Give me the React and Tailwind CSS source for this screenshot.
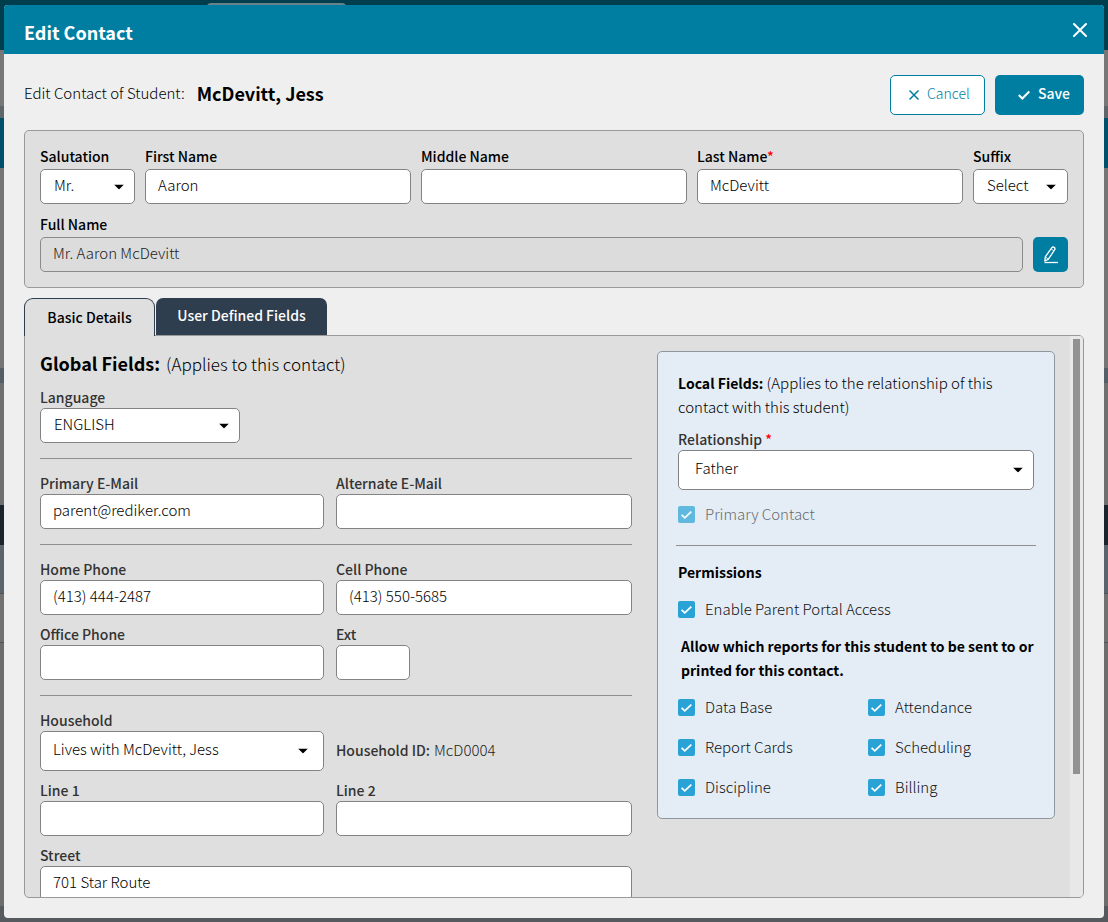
import React from "react";

const fieldBox =
  "w-full rounded-[5px] border border-[#838383] bg-white text-[15px] font-light text-black outline-none";

function Caret({ className }) {
  return (
    <svg viewBox="0 0 10 5" className={`pointer-events-none absolute top-1/2 h-[5px] w-[10px] -translate-y-1/2 ${className}`} aria-hidden="true">
      <path d="M0 0h10L5 5z" fill="#000" />
    </svg>
  );
}

function Label({ id, children, className = "leading-[18px] text-[#333]" }) {
  return (
    <label htmlFor={id} className={`block whitespace-nowrap pb-[2px] text-sm font-medium ${className}`}>
      {children}
    </label>
  );
}

function TextField({ id, label, value = "", labelClass, className = "" }) {
  return (
    <div className={className}>
      <Label id={id} className={labelClass}>{label}</Label>
      <input id={id} type="text" defaultValue={value} className={`${fieldBox} block h-[35px] px-3 pb-1`} />
    </div>
  );
}

function SelectField({ id, label, value, labelClass, className = "", size = "h-[35px] pb-[2px] pl-[13px]", caret = "right-[11px]" }) {
  return (
    <div className={className}>
      <Label id={id} className={labelClass}>{label}</Label>
      <div className="relative">
        <select id={id} defaultValue={value} className={`${fieldBox} block appearance-none ${size}`}>
          <option>{value}</option>
        </select>
        <Caret className={caret} />
      </div>
    </div>
  );
}

function Check({ id, label, disabled = false }) {
  return (
    <div className={`flex h-6 items-center gap-[10px] ${disabled ? "opacity-70" : ""}`}>
      <span className="relative flex">
        <input id={id} type="checkbox" defaultChecked disabled={disabled} className="size-[17px] appearance-none rounded-[2px] bg-[#29a3d5]" />
        <svg viewBox="0 0 17 17" className="pointer-events-none absolute inset-0 size-[17px]" fill="none" stroke="#fff" strokeWidth="1.8" aria-hidden="true">
          <path d="M3.6 8.8l3.2 3 6.5-6.2" />
        </svg>
      </span>
      <label htmlFor={id} className={`text-[15px] font-light leading-6 ${disabled ? "text-[#333]" : "text-[#111]"}`}>{label}</label>
    </div>
  );
}

const Rule = ({ className = "my-[15px]" }) => <hr className={`border-t border-[#8f8f8f] ${className}`} />;

function Backdrop() {
  return (
    <div className="flex h-full flex-col bg-[#6b6b6b]" aria-hidden="true">
      <div className="h-[50px] shrink-0 bg-[#003d4d] pl-[207px] pt-[3px]">
        <div className="h-2 w-[139px] rounded-t-[4px] bg-[#66828a]" />
      </div>
      <div className="h-14 shrink-0 bg-[#777]" />
      <div className="h-3 shrink-0 bg-[#5f6669]" />
      <div className="h-[50px] shrink-0 bg-[#00506b]" />
      <div className="h-[200px] shrink-0 bg-[#757575]" />
      <div className="h-[15px] shrink-0 bg-[#545e66]" />
      <div className="h-[122px] shrink-0 bg-[#6f6f6f]" />
      <div className="h-10 shrink-0 bg-[#1b242d]" />
      <div className="h-12 shrink-0 bg-[#59646d]" />
      <div className="h-[50px] shrink-0 border-y border-[#4e565c] bg-[#717171]" />
      <div className="grow bg-[#6d6d6d]" />
      <div className="h-4 shrink-0 bg-[#56595d]" />
    </div>
  );
}

function NameCard() {
  const dark = "leading-[22px] text-black";
  return (
    <section className="mt-[15px] rounded-[5px] border border-[#999] bg-[#dfdfdf] px-[15px] pb-[15px] pt-[14px]">
      <div className="grid grid-cols-[95px_1fr_1fr_1fr_95px] gap-[10px]">
        <SelectField id="salutation" label="Salutation" value="Mr." labelClass={dark} />
        <TextField id="first" label="First Name" value="Aaron" labelClass={dark} />
        <TextField id="middle" label="Middle Name" labelClass={dark} />
        <TextField id="last" label={<>Last Name<span className="text-[#f00]">*</span></>} value="McDevitt" labelClass={dark} />
        <SelectField id="suffix" label="Suffix" value="Select" labelClass={dark} caret="right-3" />
      </div>
      <div className="mt-[9px] flex items-end gap-[10px]">
        <div className="grow">
          <Label id="full" className={dark}>Full Name</Label>
          <input id="full" type="text" readOnly value="Mr. Aaron McDevitt" className="block h-[35px] w-full rounded-[5px] border border-[#8a8a8a] bg-[#dcdcdc] px-3 pb-1 text-[15px] font-light text-[#222] outline-none" />
        </div>
        <button type="button" aria-label="Edit full name" className="flex size-[35px] items-center justify-center rounded-[5px] bg-[#007ea2] text-white">
          <svg viewBox="0 0 16 18" className="h-[18px] w-4" fill="none" stroke="currentColor" strokeWidth="1.3" strokeLinejoin="round" aria-hidden="true">
            <path d="M1.8 15l.5-4.2L8.9 1.6q1-1.1 2.3-.2t.5 2.3L5.4 13.2z" />
            <path d="M2.3 10.8l3.1 2.4M8 2.9l3 2" strokeWidth=".8" />
            <path d="M1.5 16.5H15" />
          </svg>
        </button>
      </div>
    </section>
  );
}

function GlobalFields() {
  return (
    <div>
      <h2 className="mb-[9px] flex h-7 items-baseline gap-[6px] leading-6 text-black">
        <span className="text-lg font-bold leading-6">Global Fields:</span>
        <span className="text-[17px] font-light leading-6">(Applies to this contact)</span>
      </h2>
      <SelectField id="language" label="Language" value="ENGLISH" className="w-[200px]" />
      <Rule />
      <div className="grid grid-cols-[284fr_296fr] gap-x-3 gap-y-[10px]">
        <TextField id="email" label="Primary E-Mail" value="parent@rediker.com" />
        <TextField id="email2" label="Alternate E-Mail" />
      </div>
      <Rule />
      <div className="grid grid-cols-[284fr_296fr] gap-x-3 gap-y-[10px]">
        <TextField id="home" label="Home Phone" value="(413) 444-2487" />
        <TextField id="cell" label="Cell Phone" value="(413) 550-5685" />
        <TextField id="office" label="Office Phone" />
        <TextField id="ext" label="Ext" className="w-[74px]" />
      </div>
      <Rule />
      <div className="grid grid-cols-[284fr_296fr] gap-x-3 gap-y-[10px]">
        <SelectField id="household" label="Household" value="Lives with McDevitt, Jess" size="h-10 pb-1 pl-3" caret="right-4" />
        <p className="flex h-10 items-center gap-1 self-end pb-[2px] text-[#222]">
          <span className="text-sm font-medium text-[#333]">Household ID:</span>
          <span className="text-[15px] font-light">McD0004</span>
        </p>
        <TextField id="line1" label="Line 1" />
        <TextField id="line2" label="Line 2" />
        <TextField id="street" label="Street" value="701 Star Route" className="col-span-2" />
      </div>
    </div>
  );
}

function LocalFields() {
  return (
    <section className="self-start rounded-[5px] border border-[#8f979e] bg-[#e4edf6] px-5 pb-[19px] pt-[19px] text-sm leading-6">
      <p className="text-[15px] font-light leading-6 text-black">
        <span className="text-sm font-bold leading-6">Local Fields:</span> (Applies to the relationship of this contact with this student)
      </p>
      <SelectField
        id="relationship"
        label={<>Relationship <span className="text-[#f00]">*</span></>}
        value="Father"
        className="mb-3 mt-[11px]"
        size="h-10 pb-1 pl-4"
        caret="right-[11px]"
      />
      <Check id="primary" label="Primary Contact" disabled />
      <Rule className="-mx-[2px] mb-[14px] mt-[19px]" />
      <h3 className="mb-[13px] font-bold text-black">Permissions</h3>
      <Check id="portal" label="Enable Parent Portal Access" />
      <p className="my-[13px] ml-[3px] font-bold text-black">
        Allow which reports for this student to be sent to or printed for this contact.
      </p>
      <div className="grid grid-cols-[190px_1fr] gap-y-4">
        <Check id="database" label="Data Base" />
        <Check id="attendance" label="Attendance" />
        <Check id="reportcards" label="Report Cards" />
        <Check id="scheduling" label="Scheduling" />
        <Check id="discipline" label="Discipline" />
        <Check id="billing" label="Billing" />
      </div>
    </section>
  );
}

export default function App() {
  return (
    <div className="relative h-screen overflow-hidden font-['Noto_Sans_CJK_SC','Noto_Sans',sans-serif]">
      <Backdrop />
      <div className="absolute inset-0 flex px-1 pb-1 pt-[5px]">
        <div role="dialog" aria-labelledby="title" className="flex min-w-0 grow flex-col overflow-hidden rounded-[4px] bg-[#efefef]">
          <header className="flex h-[49px] shrink-0 items-center justify-between bg-[#007ea2] pl-5 pr-[17px] text-white">
            <h1 id="title" className="pt-1 text-lg font-bold leading-6">Edit Contact</h1>
            <button type="button" aria-label="Close" className="flex">
              <svg viewBox="0 0 14 14" className="size-[14px]" fill="none" stroke="currentColor" strokeWidth="2" strokeLinecap="round" aria-hidden="true">
                <path d="M1 1l12 12M13 1L1 13" />
              </svg>
            </button>
          </header>
          <main className="flex min-h-0 grow flex-col px-5 pb-5 pt-[21px]">
            <div className="flex items-center justify-between">
              <p className="flex items-center gap-3 pb-1 text-[15px] font-light leading-6 text-black">
                Edit Contact of Student: <strong className="text-lg font-bold leading-6">McDevitt, Jess</strong>
              </p>
              <div className="flex gap-[10px]">
                <button type="button" className="flex h-10 w-[95px] items-center gap-2 rounded-[5px] border border-[#007ea2] bg-white pl-[18px] text-sm font-light text-[#007ea2]">
                  <svg viewBox="0 0 10 10" className="size-[10px]" fill="none" stroke="currentColor" strokeWidth="1.5" aria-hidden="true">
                    <path d="M.5.5l9 9M9.5.5l-9 9" />
                  </svg>
                  <span className="pb-1">Cancel</span>
                </button>
                <button type="button" className="flex h-10 w-[89px] items-center gap-2 rounded-[5px] bg-[#007ea2] pl-[23px] text-sm font-medium text-white">
                  <svg viewBox="0 0 12 10" className="h-[10px] w-3" fill="none" stroke="currentColor" strokeWidth="2" aria-hidden="true">
                    <path d="M.8 5l3.5 3.5 7-7" />
                  </svg>
                  <span className="pb-1">Save</span>
                </button>
              </div>
            </div>
            <NameCard />
            <div role="tablist" className="z-10 -mb-px mt-[10px] flex h-[38px] items-start gap-px text-sm font-medium">
              <button type="button" role="tab" aria-selected="true" className="h-[38px] w-[131px] rounded-t-[9px] border border-b-0 border-[#2f3e4e] bg-[#dfdfdf] pb-px text-black">Basic Details</button>
              <button type="button" role="tab" aria-selected="false" className="h-[37px] w-[171px] rounded-t-[7px] bg-[#2f3e4e] pb-1 text-white">User Defined Fields</button>
            </div>
            <div className="flex min-h-0 grow overflow-hidden rounded-b-[5px] rounded-tr-[5px] border border-[#999] bg-[#dfdfdf]">
              <div className="min-w-0 grow overflow-y-auto [scrollbar-width:none]">
                <div className="grid grid-cols-[592fr_398fr] gap-[25px] p-[15px]">
                  <GlobalFields />
                  <LocalFields />
                </div>
              </div>
              <div className="w-[13px] shrink-0 bg-[#e8e8e8] pl-[3px] pt-[3px]" aria-hidden="true">
                <div className="h-[78%] w-[7px] bg-[#929292]" />
              </div>
            </div>
          </main>
        </div>
      </div>
    </div>
  );
}
